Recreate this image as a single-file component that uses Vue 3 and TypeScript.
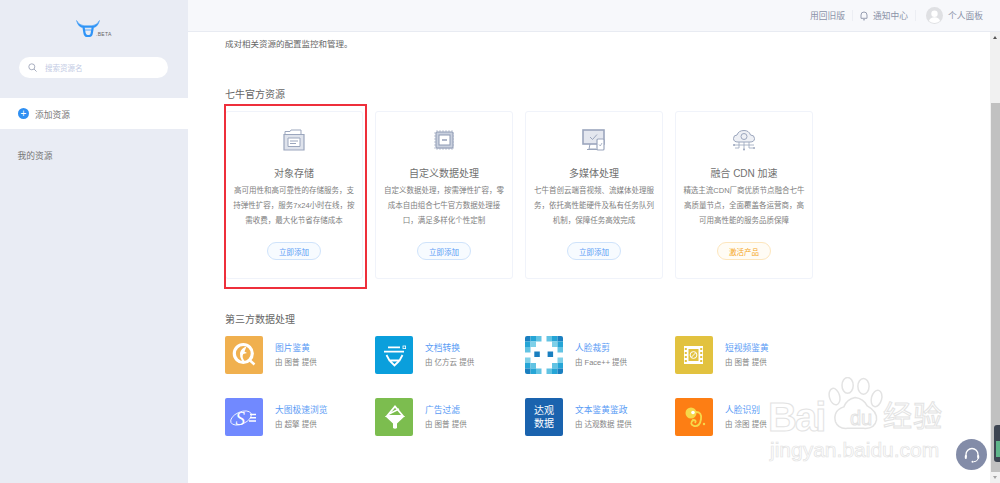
<template>
  <div class="page">
    <aside class="sidebar">
      <div class="logo">
        <svg width="24" height="17" viewBox="0 0 24 17">
          <path d="M0.5 0.5 Q2.5 5 8 5.8 L16 5.8 Q21.5 5 23.5 0.5 Q21.5 8 16 7.6 L8 7.6 Q2.5 8 0.5 0.5 Z" fill="#2f94f7" stroke="#2f94f7" stroke-width="0.5" />
          <path d="M7.5 7 L8.5 13 Q9 16 11.5 16 L13 16 Q15.5 16 15.8 13 L16.8 7" fill="none" stroke="#2f94f7" stroke-width="2.2" />
          <path d="M9 10 H15.5" stroke="#2f94f7" stroke-width="0.8" />
        </svg>
        <span class="beta">.BETA</span>
      </div>
      <div class="search">
        <svg width="9" height="9" viewBox="0 0 9 9">
          <circle cx="3.8" cy="3.8" r="3" fill="none" stroke="#a9afc0" stroke-width="1" />
          <path d="M6 6 L8.6 8.6" stroke="#a9afc0" stroke-width="1" />
        </svg>
        <span class="placeholder">搜索资源名</span>
      </div>
      <div class="add-row">
        <span class="plus">+</span>
        <span class="add-text">添加资源</span>
      </div>
      <div class="my-res">我的资源</div>
    </aside>

    <div class="main">
      <header class="topbar">
        <span>用回旧版</span>
        <i class="sep"></i>
        <svg class="bell" width="8" height="10" viewBox="0 0 8 10">
          <path d="M1 7.3 V4 Q1 1 4 1 Q7 1 7 4 V7.3 Z" fill="none" stroke="#8b93a8" stroke-width="0.9" />
          <path d="M3 8.8 H5" stroke="#8b93a8" stroke-width="0.9" />
        </svg>
        <span>通知中心</span>
        <i class="sep"></i>
        <svg class="avatar" width="17" height="17" viewBox="0 0 17 17">
          <circle cx="8.5" cy="8.5" r="8.5" fill="#dfe0e3" />
          <circle cx="8.5" cy="6.7" r="3.2" fill="#fff" />
          <path d="M3 14 Q4 10.3 8.5 10.3 Q13 10.3 14 14 Q11.5 16 8.5 16 Q5.5 16 3 14 Z" fill="#fff" />
        </svg>
        <span>个人面板</span>
      </header>

      <div class="body">
        <div class="content">
          <p class="intro">成对相关资源的配置监控和管理。</p>

          <h2 class="section first">七牛官方资源</h2>
          <div class="cards">
            <div v-for="c in cards" :key="c.title" class="card">
              <svg class="card-icon" width="24" height="22" viewBox="0 0 24 22">
                <g v-if="c.icon === 'storage'">
                  <path d="M3 6 V2.5 H8 L9 1 H19 V6" fill="#fff" stroke="#9ba6bd" stroke-width="1" />
                  <path d="M2 5.5 H22 V21 H2 Z" fill="#dfe3ec" stroke="#9ba6bd" stroke-width="1.2" />
                  <path d="M6 9 H18 V17.5 H6 Z" fill="#fff" stroke="#9ba6bd" stroke-width="1" />
                  <path d="M8 12 H16 M8 14.5 H14" stroke="#9ba6bd" stroke-width="1" />
                </g>
                <g v-else-if="c.icon === 'chip'">
                  <path d="M5 1 V21 M8 1 V21 M11 1 V21 M14 1 V21 M17 1 V21 M20 1 V21 M2 4 H22 M2 7 H22 M2 10 H22 M2 13 H22 M2 16 H22 M2 19 H22" stroke="#aeb7ca" stroke-width="0.8" />
                  <rect x="4" y="3" width="17" height="16" rx="1" fill="#c9d0de" stroke="#8d99b3" stroke-width="1" />
                  <rect x="7" y="6" width="11" height="10" fill="#fff" stroke="#8d99b3" stroke-width="1" />
                  <path d="M10 11 H15" stroke="#8d99b3" stroke-width="1.4" />
                </g>
                <g v-else-if="c.icon === 'media'">
                  <rect x="1" y="1" width="21" height="14" fill="#e4e7ef" stroke="#9ba6bd" stroke-width="1.6" />
                  <path d="M8 8 L10.5 10.5 L15 5.5" fill="none" stroke="#9ba6bd" stroke-width="1" />
                  <path d="M8 15 L7 20 H14 M5 20.5 H15" fill="none" stroke="#9ba6bd" stroke-width="1" />
                  <rect x="15" y="10" width="7" height="11" rx="1" fill="#fff" stroke="#9ba6bd" stroke-width="1.2" />
                  <path d="M17 15.5 L18.3 17 L20 14" fill="none" stroke="#9ba6bd" stroke-width="0.8" />
                </g>
                <g v-else>
                  <path d="M6 13 Q1.5 13 1.5 9.5 Q1.5 6 5 6 Q6.5 1.5 12 1.5 Q17 1.5 18.5 6 Q22.5 6 22.5 9.5 Q22.5 13 18 13 Z" fill="#eef0f5" stroke="#9ba6bd" stroke-width="1" />
                  <circle cx="12" cy="7.5" r="3" fill="none" stroke="#9ba6bd" stroke-width="1" />
                  <path d="M2 16 H22 M7 13 V19 H3 M12 13 V20 M17 13 V19 H21" fill="none" stroke="#9ba6bd" stroke-width="0.8" />
                  <circle cx="2" cy="16" r="1" fill="#9ba6bd" />
                  <circle cx="12" cy="20.5" r="1" fill="#9ba6bd" />
                  <circle cx="22" cy="19" r="1" fill="#9ba6bd" />
                </g>
              </svg>
              <h3 class="card-title">{{ c.title }}</h3>
              <div class="card-desc">
                <span v-for="line in c.lines" :key="line">{{ line }}</span>
              </div>
              <button class="card-btn" :class="{ warn: c.warn }">{{ c.btn }}</button>
            </div>
          </div>

          <h2 class="section second">第三方数据处理</h2>
          <div class="grid">
            <div v-for="t in tools" :key="t.name" class="tool">
              <div class="tile" :class="'tile-' + t.icon">
                <svg v-if="t.icon === 'q'" width="38" height="38" viewBox="0 0 38 38">
                  <circle cx="18.3" cy="17.5" r="9" fill="none" stroke="#fff" stroke-width="3.2" />
                  <path d="M25 24.5 L29.5 28.5" stroke="#fff" stroke-width="2.4" />
                  <path d="M21.5 10.5 Q16 12 15 17 Q14.5 21 17 25 L19.5 25 Q16.5 21 18.3 18 L22 17 L19.5 15.5 Z" fill="#fff" />
                </svg>
                <svg v-else-if="t.icon === 'doc'" width="38" height="38" viewBox="0 0 38 38">
                  <path d="M13 11.3 H25 M9 15.7 H29" stroke="#fff" stroke-width="1.8" />
                  <path d="M11.5 19 L14.5 24.5 H24.5 L27.5 19" fill="none" stroke="#fff" stroke-width="1.8" />
                  <path d="M15 25 L19.5 29.5 L24 25" fill="none" stroke="#fff" stroke-width="1.8" />
                  <rect x="28" y="10" width="2.6" height="2.6" fill="none" stroke="#fff" stroke-width="0.8" />
                </svg>
                <svg v-else-if="t.icon === 'face'" width="38" height="38" viewBox="0 0 38 38">
                  <g v-for="(s, i) in faceSquares" :key="i">
                    <rect :x="s[0]" :y="s[1]" width="5.5" height="5.5" :fill="s[2]" />
                  </g>
                </svg>
                <svg v-else-if="t.icon === 'film'" width="38" height="38" viewBox="0 0 38 38">
                  <rect x="9" y="10" width="19" height="18" fill="#fff" />
                  <path d="M10.8 12 V26 M26.2 12 V26" stroke="#e2c23f" stroke-width="2" stroke-dasharray="2 2" />
                  <rect x="13.5" y="13" width="10" height="12" fill="#e2c23f" />
                  <circle cx="18.5" cy="19" r="3.4" fill="none" stroke="#fff" stroke-width="1" />
                  <path d="M16.5 21 L20.5 17" stroke="#fff" stroke-width="1" />
                </svg>
                <svg v-else-if="t.icon === 's'" width="38" height="38" viewBox="0 0 38 38">
                  <ellipse cx="16" cy="20" rx="11" ry="6" transform="rotate(-24 16 20)" fill="none" stroke="#fff" stroke-width="0.8" />
                  <text x="10.5" y="27" class="s-letter">S</text>
                  <path d="M25 16.5 H31 M25 19.8 H31 M24 23 H31" stroke="#fff" stroke-width="1.5" />
                </svg>
                <svg v-else-if="t.icon === 'funnel'" width="38" height="38" viewBox="0 0 38 38">
                  <path d="M12 18 L20 8.5 L28 18 Z" fill="none" stroke="#fff" stroke-width="1.8" />
                  <path d="M14 16 L24 11" stroke="#fff" stroke-width="1.5" />
                  <path d="M10 18 H30 L22 25.5 V30 Q20 31.5 18 30 V25.5 Z" fill="#fff" />
                </svg>
                <span v-else-if="t.icon === 'dg'" class="dg-text">达观<br />数据</span>
                <svg v-else width="38" height="38" viewBox="0 0 38 38">
                  <circle cx="16" cy="15" r="5.5" fill="#f6d84a" />
                  <circle cx="18" cy="14.5" r="1.8" fill="#fff" />
                  <path d="M21 14 Q27 14 26 21 Q25 29 19 28 Q14 26 18 22 Q22 22 20 25" fill="none" stroke="#f6d84a" stroke-width="1.8" />
                  <circle cx="29" cy="26" r="1.2" fill="#f6d84a" />
                </svg>
              </div>
              <div class="tool-text">
                <div class="tool-name">{{ t.name }}</div>
                <div class="tool-sub">{{ t.sub }}</div>
              </div>
            </div>
          </div>
        </div>

        <div class="scrollbar">
          <i class="arrow up"></i>
          <div class="thumb"></div>
          <i class="arrow down"></i>
        </div>
      </div>
    </div>

    <div class="redbox"></div>

    <div class="watermark">
      <svg class="paw" width="56" height="56" viewBox="0 0 60 60">
        <g fill="none" stroke="#e3e3e3" stroke-width="1.6">
          <ellipse cx="7" cy="21" rx="5.5" ry="9" transform="rotate(-15 7 21)" />
          <ellipse cx="21" cy="9" rx="6" ry="8.5" />
          <ellipse cx="38" cy="10" rx="6" ry="8.5" />
          <ellipse cx="52" cy="23" rx="5.5" ry="9" transform="rotate(15 52 23)" />
          <path d="M29 22 Q20 24 17 32 Q5 36 8 48 Q11 56 21 55 H38 Q50 56 52 46 Q53 37 42 31 Q38 23 29 22 Z" />
        </g>
      </svg>
      <span class="wm-bai">Bai</span>
      <span class="wm-du">du</span>
      <span class="wm-cn">经验</span>
      <span class="wm-url">jingyan.baidu.com</span>
    </div>

    <div class="edge-widget"><i></i></div>
    <div class="help">
      <svg width="18" height="18" viewBox="0 0 18 18">
        <path d="M3 11 V8.5 A6 6 0 0 1 15 8.5 V11" fill="none" stroke="#fff" stroke-width="1.3" />
        <rect x="1.8" y="9" width="2" height="4" rx="1" fill="#fff" />
        <rect x="14.2" y="9" width="2" height="4" rx="1" fill="#fff" />
        <path d="M15 13 Q14 15.8 10.5 15.8" fill="none" stroke="#fff" stroke-width="1" />
        <circle cx="9.5" cy="15.8" r="1" fill="#fff" />
      </svg>
    </div>
  </div>
</template>

<script setup lang="ts">
interface Card {
  title: string
  icon: string
  lines: string[]
  btn: string
  warn?: boolean
}

const cards: Card[] = [
  {
    title: '对象存储',
    icon: 'storage',
    lines: ['高可用性和高可靠性的存储服务，支', '持弹性扩容，服务7x24小时在线，按', '需收费，最大化节省存储成本'],
    btn: '立即添加'
  },
  {
    title: '自定义数据处理',
    icon: 'chip',
    lines: ['自定义数据处理，按需弹性扩容，零', '成本自由组合七牛官方数据处理接', '口，满足多样化个性定制'],
    btn: '立即添加'
  },
  {
    title: '多媒体处理',
    icon: 'media',
    lines: ['七牛首创云端音视频、流媒体处理服', '务，依托高性能硬件及私有任务队列', '机制，保障任务高效完成'],
    btn: '立即添加'
  },
  {
    title: '融合 CDN 加速',
    icon: 'cloud',
    lines: ['精选主流CDN厂商优质节点融合七牛', '高质量节点，全面覆盖各运营商，高', '可用高性能的服务品质保障'],
    btn: '激活产品',
    warn: true
  }
]

const tools = [
  { name: '图片鉴黄', sub: '由 图普 提供', icon: 'q' },
  { name: '文档转换', sub: '由 亿方云 提供', icon: 'doc' },
  { name: '人脸裁剪', sub: '由 Face++ 提供', icon: 'face' },
  { name: '短视频鉴黄', sub: '由 图普 提供', icon: 'film' },
  { name: '大图极速浏览', sub: '由 超擎 提供', icon: 's' },
  { name: '广告过滤', sub: '由 图普 提供', icon: 'funnel' },
  { name: '文本鉴黄鉴政', sub: '由 达观数据 提供', icon: 'dg' },
  { name: '人脸识别', sub: '由 涂图 提供', icon: 'monkey' }
]

// 人脸裁剪图标的小方块
const faceSquares: [number, number, string][] = [
  [0, 0, '#1a7fc0'], [5.5, 0, '#25a5d6'], [11, 0, '#62c3e3'], [0, 5.5, '#25a5d6'], [5.5, 5.5, '#7fd0e8'], [0, 11, '#62c3e3'],
  [21.5, 0, '#62c3e3'], [27, 0, '#25a5d6'], [32.5, 0, '#1a7fc0'], [27, 5.5, '#7fd0e8'], [32.5, 5.5, '#25a5d6'], [32.5, 11, '#62c3e3'],
  [0, 21.5, '#7fd0e8'], [0, 27, '#25a5d6'], [5.5, 27, '#62c3e3'], [0, 32.5, '#1a7fc0'], [5.5, 32.5, '#25a5d6'], [11, 32.5, '#62c3e3'],
  [32.5, 21.5, '#7fd0e8'], [27, 27, '#62c3e3'], [32.5, 27, '#25a5d6'], [21.5, 32.5, '#62c3e3'], [27, 32.5, '#25a5d6'], [32.5, 32.5, '#1a7fc0'],
  [9.3, 15.5, '#1a7fc0'], [22.6, 15.5, '#1a7fc0']
]
</script>

<style scoped>
.page {
  position: relative;
  display: flex;
  width: 1000px;
  height: 483px;
  overflow: hidden;
  background: #fff;
  font-family: "Liberation Sans", "Noto Sans CJK SC", sans-serif;
  color: #666;
}

.sidebar {
  width: 188px;
  flex-shrink: 0;
  background: #e9ecf4;
}

.logo {
  display: flex;
  align-items: flex-end;
  height: 37px;
  padding: 20px 0 0 76px;
  box-sizing: border-box;
}

.beta {
  margin-left: -4px;
  font-size: 5px;
  line-height: 6px;
  letter-spacing: 0.3px;
  color: #666;
}

.search {
  display: flex;
  align-items: center;
  width: 149px;
  height: 21px;
  margin: 20px 0 0 19px;
  padding-left: 9px;
  box-sizing: border-box;
  background: #fff;
  border-radius: 11px;
}

.placeholder {
  margin-left: 8px;
  font-size: 7.5px;
  color: #c3cbe4;
}

.add-row {
  display: flex;
  align-items: center;
  height: 31px;
  margin-top: 20px;
  padding-left: 18px;
  background: #fff;
  font-size: 8.75px;
  color: #777;
}

.add-text {
  padding-top: 2px;
}

.plus {
  display: flex;
  align-items: center;
  justify-content: center;
  width: 11px;
  height: 11px;
  margin-right: 6px;
  border-radius: 50%;
  background: #2f8ff2;
  color: #fff;
  font-size: 10px;
  line-height: 11px;
}

.my-res {
  margin: 21px 0 0 17.5px;
  font-size: 8.75px;
  line-height: 13px;
  color: #777;
}

.main {
  flex: 1;
  display: flex;
  flex-direction: column;
  min-width: 0;
}

.topbar {
  display: flex;
  align-items: center;
  justify-content: flex-end;
  height: 32px;
  padding-right: 17px;
  box-sizing: border-box;
  background: #f7f8fb;
  border-bottom: 1px solid #e8ebf2;
  font-size: 8.75px;
  color: #8b93a8;
}

.sep {
  width: 1px;
  height: 11px;
  margin: 0 7px;
  background: #eceef3;
}

.bell {
  margin-right: 5px;
}

.avatar {
  margin: 0 5px 0 3px;
}

.body {
  flex: 1;
  display: flex;
  min-height: 0;
}

.content {
  flex: 1;
  padding: 5px 0 0 37px;
}

.intro {
  margin: 0;
  font-size: 8.5px;
  line-height: 15px;
  color: #666;
}

.section {
  margin: 0;
  font-size: 10px;
  font-weight: normal;
  line-height: 14px;
  color: #666;
}

.section.first {
  margin-top: 36px;
}

.section.second {
  margin-top: 34px;
}

.cards {
  display: flex;
  gap: 12px;
  margin-top: 9px;
}

.card {
  display: flex;
  flex-direction: column;
  align-items: center;
  width: 138px;
  height: 168px;
  padding-top: 17px;
  box-sizing: border-box;
  border: 1px solid #f0f3fa;
  border-radius: 3px;
}

.card-icon {
  flex-shrink: 0;
}

.card-title {
  margin: 16px 0 0;
  font-size: 10px;
  font-weight: normal;
  line-height: 14px;
  color: #707070;
}

.card-desc {
  margin-top: 1.5px;
  font-size: 7.5px;
  line-height: 15px;
  color: #808080;
  text-align: center;
}

.card-desc span {
  display: block;
  white-space: nowrap;
}

.card-btn {
  width: 54px;
  height: 18px;
  margin-top: 14.5px;
  padding: 0;
  background: #f7fbff;
  border: 1px solid #cfe3fb;
  border-radius: 9px;
  font-family: inherit;
  font-size: 7.5px;
  color: #5b9cf5;
}

.card-btn.warn {
  background: #fffcf5;
  border-color: #fde6bd;
  color: #f5a623;
}

.grid {
  display: grid;
  grid-template-columns: repeat(4, 150px);
  row-gap: 24px;
  margin-top: 9px;
}

.tool {
  display: flex;
  align-items: center;
}

.tile {
  display: flex;
  align-items: center;
  justify-content: center;
  width: 38px;
  height: 38px;
  overflow: hidden;
  border-radius: 2px;
}

.tile svg {
  display: block;
}

.tile-q { background: #f0b04f; }
.tile-doc { background: #0a9fdc; }
.tile-face { background: #fff; }
.tile-film { background: #e2c23f; }
.tile-s { background: #7189ff; }
.tile-funnel { background: #7cbd4f; }
.tile-dg { background: #1a63ae; }
.tile-monkey { background: #fd7e14; }

.s-letter {
  font-family: "Liberation Serif", serif;
  font-size: 19px;
  font-style: italic;
  fill: #fff;
}

.dg-text {
  font-size: 10px;
  line-height: 13px;
  color: #fff;
  text-align: center;
}

.tool-text {
  margin-left: 12px;
  padding-top: 1px;
  white-space: nowrap;
}

.tool-name {
  font-size: 8.75px;
  line-height: 13px;
  color: #5b9cf5;
}

.tool-sub {
  margin-top: 2px;
  font-size: 7.5px;
  line-height: 12px;
  color: #858585;
}

.scrollbar {
  position: relative;
  width: 10px;
  flex-shrink: 0;
  background: #f1f1f1;
}

.thumb {
  position: absolute;
  top: 71px;
  left: 1px;
  right: 0;
  height: 369px;
  background: #c1c1c1;
}

.arrow {
  position: absolute;
  left: 2.5px;
  border-left: 2.5px solid transparent;
  border-right: 2.5px solid transparent;
}

.arrow.up {
  top: 4px;
  border-bottom: 3px solid #555;
}

.arrow.down {
  bottom: 4px;
  border-top: 3px solid #a3a3a3;
}

.redbox {
  position: absolute;
  left: 224px;
  top: 104px;
  width: 139px;
  height: 181px;
  border: 2px solid #ee2f3b;
  pointer-events: none;
}

.watermark {
  position: absolute;
  left: 768px;
  top: 375px;
  width: 180px;
  height: 84px;
  pointer-events: none;
  color: transparent;
}

.paw {
  position: absolute;
  left: 60px;
  top: 2px;
}

.watermark span {
  position: absolute;
  -webkit-text-stroke: 1px #e3e3e3;
  white-space: nowrap;
}

.wm-bai {
  left: 0;
  top: 16px;
  font-size: 40px;
  line-height: 52px;
  font-weight: bold;
  letter-spacing: -2px;
}

.wm-du {
  left: 82px;
  top: 31px;
  font-size: 20px;
  line-height: 24px;
}

.wm-cn {
  left: 115px;
  top: 26px;
  font-size: 29px;
  line-height: 32px;
  letter-spacing: 1px;
}

.watermark .wm-url {
  left: 2px;
  top: 63px;
  font-size: 21px;
  line-height: 24px;
  -webkit-text-stroke-width: 0.7px;
}

.edge-widget {
  position: absolute;
  left: 994px;
  top: 425px;
  width: 6px;
  height: 37px;
  background: #3d4552;
  border-radius: 3px 0 0 3px;
}

.edge-widget i {
  position: absolute;
  left: 2px;
  top: 16px;
  width: 4px;
  height: 16px;
  background: #5fb58a;
}

.help {
  position: absolute;
  left: 956px;
  top: 439px;
  display: flex;
  align-items: center;
  justify-content: center;
  width: 31px;
  height: 31px;
  border-radius: 50%;
  background: #838ca8;
}
</style>

<style>
body {
  overflow: hidden;
}
</style>
